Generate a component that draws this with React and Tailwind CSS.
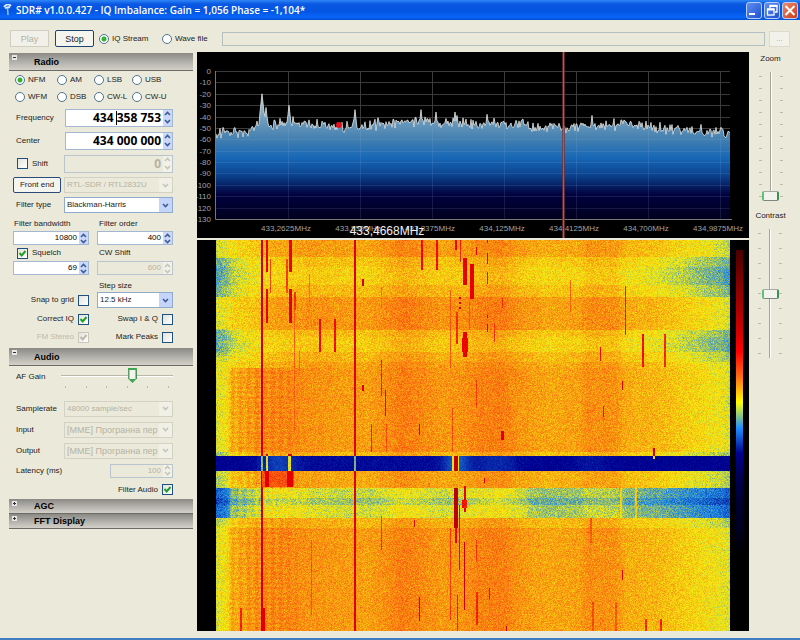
import React, { useEffect, useRef } from "react";

/* ---------- signal data ---------- */

function makeRandom(seed) {
  let s = seed;
  return () => {
    s = (s * 1664525 + 1013904223) >>> 0;
    return s / 4294967296;
  };
}

function interpolate(points, x) {
  if (x <= points[0][0]) return points[0][1];
  for (let i = 1; i < points.length; i++) {
    const [x1, y1] = points[i];
    if (x <= x1) {
      const [x0, y0] = points[i - 1];
      return y0 + ((y1 - y0) * (x - x0)) / (x1 - x0);
    }
  }
  return points[points.length - 1][1];
}

const PALETTE = [
  [0, 0, 0], [0, 0, 32], [0, 0, 48], [0, 0, 80], [0, 0, 145], [30, 135, 225],
  [244, 236, 16], [250, 109, 16], [240, 0, 0], [198, 0, 0], [159, 0, 0], [117, 0, 0], [74, 0, 0],
];

const WF_W = 514;
const WF_H = 391;

const COLUMN_LEVEL = [
  [0, 5.9], [10, 6.1], [16, 6.4], [45, 6.68], [75, 6.75], [100, 6.7], [150, 6.6], [172, 6.75], [185, 6.88],
  [205, 6.78], [225, 6.65], [245, 6.7], [264, 6.83], [285, 6.88], [305, 6.68], [330, 6.55], [362, 6.6],
  [372, 6.75], [400, 6.7], [410, 6.5], [440, 6.43], [465, 6.28], [490, 6.12], [505, 6.0], [514, 5.85],
];

/* y0, y1, level offset, extra offset near both band edges */
const TIME_BANDS = [
  [0, 17, -0.05, -0.1], [17, 27, -0.32, -0.18], [27, 45, -0.42, -0.28], [45, 57, -0.26, -0.2],
  [57, 90, 0.02, -0.04], [90, 97, -0.28, -0.18], [97, 112, -0.38, -0.2], [112, 122, -0.2, -0.1],
  [122, 128, -0.06, 0], [212, 216, -0.25, -0.1], [231, 248, -0.12, -0.12], [248, 258, -0.9, -0.2],
  [258, 265, -1.12, -0.22], [265, 278, -0.85, -0.2], [278, 288, -0.2, -0.05],
];

/* x, y0, y1, width, level */
const STREAKS = [
  [50, 0, 32, 2, 8.1], [50, 49, 83, 2, 8.1], [73, 0, 32, 3, 8.1], [73, 49, 83, 3, 8.3],
  [54, 19, 53, 1, 7.4], [70, 19, 53, 2, 7.4], [78, 52, 70, 2, 7.5], [78, 70, 190, 1, 7.1],
  [83, 110, 135, 1, 7], [93, 34, 65, 1, 7], [103, 79, 112, 2, 8], [118, 79, 112, 2, 7.9],
  [146, 39, 46, 2, 8.5], [146, 145, 151, 2, 8.5], [165, 47, 68, 1, 7], [165, 120, 156, 1, 7.7],
  [169, 150, 176, 1, 8.1], [155, 184, 212, 1, 7.7], [170, 184, 212, 1, 7.3], [203, 184, 195, 1, 8.6],
  [205, 0, 30, 2, 8], [220, 0, 30, 2, 7.9], [239, 0, 10, 2, 8], [244, 0, 22, 1, 7.7],
  [247, 18, 45, 4, 8.2], [254, 24, 59, 4, 8.2], [243, 57, 59, 2, 8.5], [243, 62, 64, 2, 8.5],
  [243, 67, 69, 2, 8.5], [240, 72, 104, 2, 7.6], [247, 92, 117, 4, 8.3], [246, 98, 112, 6, 8],
  [234, 50, 128, 1, 7.2], [236, 168, 212, 1, 7.3], [260, 7, 15, 1, 8], [260, 140, 168, 1, 7.5],
  [253, 60, 90, 1, 7.2], [271, 0, 3, 1, 8], [271, 13, 24, 1, 8.2], [271, 32, 44, 1, 8],
  [271, 75, 78, 1, 8.4], [271, 84, 92, 1, 8.4], [278, 83, 102, 1, 7.5], [286, 58, 68, 1, 7.5],
  [285, 191, 200, 3, 8.4], [354, 40, 72, 1, 7.1], [384, 107, 121, 1, 8], [387, 166, 177, 1, 7.8],
  [406, 141, 150, 1, 8.3], [409, 46, 95, 1, 7.8], [426, 94, 127, 2, 7.9], [448, 94, 127, 2, 7.6],
  [437, 208, 216, 2, 8.8], [437, 216, 219, 2, 6.2], [46, 231, 247, 32, 7.25], [49, 231, 247, 4, 8.4],
  [71, 231, 247, 6, 8.3], [50, 214, 216, 2, 8.6], [72, 214, 216, 4, 8.6],
  [238, 248, 288, 4, 9.2], [239, 288, 303, 2, 8], [243, 265, 330, 1, 8.2], [248, 246, 272, 2, 8.2],
  [246, 260, 268, 5, 7.8], [248, 302, 370, 1, 8.8], [234, 288, 380, 1, 7.5], [260, 300, 322, 1, 7.5],
  [260, 352, 385, 2, 7.7], [203, 357, 381, 1, 8.5], [165, 276, 310, 1, 7.5], [198, 280, 287, 1, 8],
  [24, 368, 391, 2, 7.7], [46, 368, 391, 3, 8.4], [241, 355, 391, 1, 7.7], [95, 300, 375, 1, 7.2],
  [404, 248, 278, 2, 6.2], [419, 248, 278, 2, 6.3], [406, 330, 340, 1, 8.2], [374, 278, 303, 2, 7.2],
  [376, 362, 391, 2, 7.3], [399, 362, 391, 2, 7.2], [429, 379, 391, 2, 7.6], [444, 379, 391, 2, 7.7],
  [290, 386, 391, 1, 8.6], [268, 238, 243, 1, 8.5], [273, 348, 360, 1, 7.8],
];

function waterfallLevel(x, y, rand) {
  const noise = rand() + rand() + rand() - 1.5;
  if (y >= 216 && y < 231) {
    if (x === 45 || x === 46) return 5.5 + noise * 0.3;
    if (x === 50 || x === 51) return 5.8 + noise * 0.3;
    if (x >= 72 && x <= 74) return 6 + noise * 0.3;
    if (x === 139 || x === 138) return 5.4 + noise * 0.2;
    if (x >= 238 && x <= 241) return 9 + noise * 0.3;
    if (x === 236 || x === 237 || x === 242) return 5.9;
    const glow =
      0.6 * Math.exp(-((x - 240) ** 2) / 160) + 0.4 * Math.exp(-((x - 62) ** 2) / 300) +
      0.22 * Math.exp(-((x - 280) ** 2) / 500) + 0.15 * Math.exp(-((x - 374) ** 2) / 300) +
      (x > 40 && x < 300 ? 0.07 : 0);
    return 4 + glow + noise * 0.12;
  }
  let v = interpolate(COLUMN_LEVEL, x);
  let amp = 0.33;
  const edge = x < 45 ? 1 - x / 70 : x > 400 ? (x - 400) / 110 : 0;
  for (const [y0, y1, offset, edgeOffset] of TIME_BANDS) {
    if (y >= y0 && y < y1) v += offset + edgeOffset * edge;
  }
  if (y >= 248 && y < 278) {
    if (x > 45 && x < 90) v += 0.05;
    if (x > 310) v -= 0.1;
    else if (x < 14) v -= 0.1;
    else v += 0.05;
  }
  /* the left shoulder stays near yellow before the gain change */
  if (y < 128 && x < 90) v = x < 46 ? v * 0.55 + 2.68 : v - 0.3 * (1 - x / 110);
  if (y < 128 && x < 46) {
    v -= (x < 30 ? 0.32 * (1 - x / 34) : 0) * (y > 17 && y < 57 ? 1 : y > 88 && y < 116 ? 0.95 : 0);
    amp = 0.36;
  }
  if (y >= 128 && x > 12 && x < 90) {
    const fade = x < 60 ? 1 : (90 - x) / 30;
    v += (0.1 + 0.1 * Math.sin((x - 14) * 0.78) + 0.08 * Math.sin(y * 1.25)) * fade;
  }
  if (x === 45 || x === 46) return 9.2 + noise * 0.4 - (x === 46 ? 0.5 : 0);
  if (x === 138 || x === 139) return 8.4 + noise * 0.4;
  return v + noise * amp;
}

function paintWaterfall(canvas) {
  const ctx = canvas.getContext("2d");
  const image = ctx.createImageData(WF_W, WF_H);
  const rand = makeRandom(427);
  const levels = new Float32Array(WF_W * WF_H);
  for (let y = 0; y < WF_H; y++) {
    for (let x = 0; x < WF_W; x++) levels[y * WF_W + x] = waterfallLevel(x, y, rand);
  }
  for (const [x0, y0, y1, w, level] of STREAKS) {
    for (let y = y0; y < y1; y++) {
      for (let x = x0; x < x0 + w; x++) levels[y * WF_W + x] = level + (rand() - 0.5) * 0.5;
    }
  }
  for (let i = 0; i < levels.length; i++) {
    const v = Math.max(0, Math.min(11.99, levels[i]));
    const k = Math.floor(v);
    const f = v - k;
    for (let c = 0; c < 3; c++) {
      image.data[i * 4 + c] = PALETTE[k][c] + (PALETTE[k + 1][c] - PALETTE[k][c]) * f;
    }
    image.data[i * 4 + 3] = 255;
  }
  ctx.putImageData(image, 0, 0);
}

const FLOOR = [
  [19, -54], [50, -53], [60, -47], [95, -46], [133, -48], [155, -49], [170, -49], [185, -46], [215, -45],
  [255, -46], [305, -46], [343, -49], [368, -50], [403, -47], [435, -47], [465, -51], [500, -52], [533, -55],
];
const PEAKS = [
  [65, -20], [69, -32], [92, -30], [96, -40], [158, -34], [224, -34], [239, -36], [258, -36], [260, -39],
  [290, -38], [395, -39], [428, -44], [463, -45],
];

const dbToY = (db) => 19 - (db * 148) / 130;

function buildTrace() {
  const rand = makeRandom(91);
  const pts = [];
  for (let x = 19; x <= 533; x++) {
    let db = interpolate(FLOOR, x) + (rand() + rand() - 1) * 6;
    for (const [px, level] of PEAKS) {
      const d = Math.abs(x - px);
      if (d < 3) db = Math.max(db, level - d * 8);
    }
    pts.push(`${x},${dbToY(db).toFixed(1)}`);
  }
  return pts.join(" ");
}

const TRACE = buildTrace();
const DB_MARKS = [0, 10, 20, 30, 40, 50, 60, 70, 80, 90, 100, 110, 120, 130];
const FREQ_MARKS = [
  [92, "433,2625MHz"], [164, "433,550MHz"], [236, "433,8375MHz"], [308, "434,125MHz"],
  [380, "434,4125MHz"], [452, "434,700MHz"], [524, "434,9875MHz"],
];

/* ---------- plots ---------- */

function Spectrum() {
  return (
    <svg viewBox="0 0 552 186" className="block w-full bg-black font-['Liberation_Sans',sans-serif]">
      <defs>
        <linearGradient id="fill" gradientUnits="userSpaceOnUse" x1="0" y1="45" x2="0" y2="167">
          <stop offset="0" stopColor="#a9c4d6" />
          <stop offset="0.2" stopColor="#6b9abc" />
          <stop offset="0.34" stopColor="#4480b0" />
          <stop offset="0.5" stopColor="#1767b6" />
          <stop offset="0.64" stopColor="#0b438f" />
          <stop offset="0.8" stopColor="#02023f" />
          <stop offset="1" stopColor="#00001e" />
        </linearGradient>
      </defs>
      <g stroke="#3b3b3b" strokeWidth="1">
        {DB_MARKS.slice(0, 13).map((d) => (
          <line key={d} x1="19" x2="533" y1={Math.round(dbToY(-d)) + 0.5} y2={Math.round(dbToY(-d)) + 0.5} />
        ))}
        {FREQ_MARKS.map(([x]) => (
          <line key={x} x1={x - 0.5} x2={x - 0.5} y1="19" y2="167" />
        ))}
      </g>
      <polygon points={`19,167 ${TRACE} 533,167`} fill="url(#fill)" />
      <g stroke="#a0c0e0" strokeOpacity="0.13" strokeWidth="1">
        {DB_MARKS.slice(6, 13).map((d) => (
          <line key={d} x1="19" x2="533" y1={Math.round(dbToY(-d)) + 0.5} y2={Math.round(dbToY(-d)) + 0.5} />
        ))}
        {FREQ_MARKS.map(([x]) => (
          <line key={x} x1={x - 0.5} x2={x - 0.5} y1="76" y2="167" />
        ))}
      </g>
      <polyline points={TRACE} fill="none" stroke="#e6e6e2" strokeWidth="0.8" />
      <path d="M18.500 19V167.500H535" fill="none" stroke="#777" />
      <g fill="#a0a0a0" fontSize="8">
        {DB_MARKS.map((d) => (
          <text key={d} x="14" y={Math.round(dbToY(-d)) + 3} textAnchor="end">
            {d === 0 ? "0" : `-${d}`}
          </text>
        ))}
        {FREQ_MARKS.map(([x, label]) => (
          <text key={x} x={x - 3} y="179" textAnchor="middle">
            {label}
          </text>
        ))}
      </g>
      <text x="190" y="183" textAnchor="middle" fontSize="12" fill="#f0f0f0">
        433,4668MHz
      </text>
      <circle cx="142" cy="73" r="3" fill="#e0101c" />
      <rect x="365" y="0" width="3" height="186" fill="#7a3030" fillOpacity="0.7" />
      <rect x="366" y="0" width="1" height="186" fill="#c2524a" />
    </svg>
  );
}

function Waterfall() {
  const ref = useRef(null);
  useEffect(() => paintWaterfall(ref.current), []);
  return (
    <div className="flex bg-black">
      <div className="w-[19px] shrink-0" />
      <canvas ref={ref} width={WF_W} height={WF_H} aria-label="Waterfall" className="block w-0 flex-1" />
      <div className="flex w-[19px] shrink-0 justify-center pt-[10px] pb-2">
        <div className="h-[305px] w-[7px] bg-[linear-gradient(#4a0000,#750000,#9f0000,#c60000,#ff0000,#fe6d16,#ffff00,#1e90ff,#000091,#000050,#000030,#000020,#000000)]" />
      </div>
    </div>
  );
}

/* ---------- controls ---------- */

function Chevron({ up, muted }) {
  return (
    <svg viewBox="0 0 7 5" className="h-[5px] w-[7px]" fill="none" stroke={muted ? "#c6c5ba" : "#3f5b96"} strokeWidth="1.600">
      <path d={up ? "M1 4L3.500 1.500L6 4" : "M1 1L3.500 3.500L6 1"} />
    </svg>
  );
}

function Radio({ name, label, checked }) {
  return (
    <label className="flex items-center gap-[3px] whitespace-nowrap">
      <input
        type="radio"
        name={name}
        defaultChecked={checked}
        className="m-0 h-[10px] w-[10px] shrink-0 appearance-none rounded-full border border-[#4f7390] bg-white checked:bg-[radial-gradient(circle,#2fb32f_0_2px,#ffffff_3px)]"
      />
      {label}
    </label>
  );
}

function Check({ label, checked, disabled, before }) {
  const box = (
    <span className="relative h-[11px] w-[11px] shrink-0">
      <input
        type="checkbox"
        defaultChecked={checked}
        disabled={disabled}
        className="peer m-0 block h-[11px] w-[11px] appearance-none border border-[#1f5080] bg-[linear-gradient(135deg,#e2e2dc,#ffffff)] disabled:border-[#cac8bb]"
      />
      {checked && (
        <svg viewBox="0 0 11 11" className="pointer-events-none absolute inset-0" fill="none" stroke={disabled ? "#bdbbae" : "#21a121"} strokeWidth="2">
          <path d="M2.500 5L4.700 7.500L8.500 3" />
        </svg>
      )}
    </span>
  );
  return (
    <label className={`flex items-center gap-1 whitespace-nowrap ${disabled ? "text-[#bdbbad]" : ""}`}>
      {before && label}
      {box}
      {!before && label}
    </label>
  );
}

function Spin({ id, label, value, disabled, big, caret, className }) {
  return (
    <div className={`flex border ${disabled ? "border-[#b9c4cc] bg-[#ebe9da]" : "border-[#a3b8d0] bg-white"} ${big ? "h-[18px]" : "h-[14px]"} ${className || ""}`}>
      <div className="relative flex min-w-0 flex-1">
        <input
          id={id}
          aria-label={label}
          defaultValue={value}
          disabled={disabled}
          className={`w-full min-w-0 bg-transparent pr-[2px] text-right outline-none ${disabled ? "text-[#b5b3a5]" : "text-black"} ${big ? "font-['Open_Sans',sans-serif] text-[12px] font-bold" : ""}`}
        />
        {caret && <span className="absolute top-px right-[46px] h-[14px] w-px bg-black" />}
      </div>
      <div className={`flex w-[9px] shrink-0 flex-col ${disabled ? "bg-[#f2f1e8]" : "bg-[#c9d8fb]"}`}>
        <button aria-label="Increase" disabled={disabled} className="flex flex-1 items-center justify-center">
          <Chevron up muted={disabled} />
        </button>
        <button aria-label="Decrease" disabled={disabled} className="flex flex-1 items-center justify-center">
          <Chevron muted={disabled} />
        </button>
      </div>
    </div>
  );
}

function Select({ id, label, value, disabled, large }) {
  return (
    <div className={`relative h-4 w-[109px] shrink-0 border ${disabled ? "border-[#d3d1c4]" : "border-[#8fabc9] bg-white"}`}>
      <select
        id={id}
        aria-label={label}
        disabled={disabled}
        className={`block h-full w-full appearance-none bg-transparent pr-3 pl-[2px] outline-none disabled:text-[#b5b3a5] disabled:opacity-100 ${large ? "text-[9px]" : ""}`}
      >
        <option>{value}</option>
      </select>
      <span className={`pointer-events-none absolute inset-y-0 right-0 flex w-[13px] items-center justify-center ${disabled ? "bg-[#f1f0e7]" : "bg-[#c5d5fa]"}`}>
        <Chevron muted={disabled} />
      </span>
    </div>
  );
}

function PanelHeader({ title, open, slim }) {
  return (
    <button
      aria-expanded={!!open}
      className={`relative flex w-full items-center border-b border-[#6d6b66] bg-[linear-gradient(#8b8984,#b4b2ac_55%,#d2d0c8)] pl-[25px] text-left font-bold text-[9px] text-black ${slim ? "h-[15px]" : "h-[18px]"}`}
    >
      <span className="absolute top-[2px] left-[3px] flex h-[5px] w-[5px] items-center justify-center bg-[#e8e8e8]">
        <svg viewBox="0 0 5 5" className="h-[5px] w-[5px]" stroke="#333" strokeWidth="1">
          <path d={open ? "M1 2.500H4" : "M1 2.500H4M2.500 1V4"} />
        </svg>
      </span>
      {title}
    </button>
  );
}

function Row({ id, label, height, children }) {
  return (
    <div className={`flex items-center justify-between pl-[7px] pr-5 ${height}`}>
      <label htmlFor={id}>{label}</label>
      {children}
    </div>
  );
}

function VerticalSlider({ id, label, value, ticks }) {
  return (
    <div className="flex flex-col items-center">
      <label htmlFor={id} className="flex h-[14px] items-center">
        {label}
      </label>
      <div className="relative mt-[6px] flex h-[129px] w-6 justify-between">
        {[0, 1].map((side) => (
          <div key={side} className="flex flex-col justify-between py-1">
            {Array.from({ length: ticks }, (_, i) => (
              <span key={i} className="h-px w-[3px] bg-[#bdbaab]" />
            ))}
          </div>
        ))}
        <input
          id={id}
          type="range"
          defaultValue={value}
          className="absolute inset-0 m-0 h-full w-full appearance-none bg-[linear-gradient(90deg,transparent_11px,#a5a498_11px_12px,#ffffff_12px_13px,transparent_13px)] [direction:rtl] [writing-mode:vertical-lr] [&::-webkit-slider-thumb]:h-[10px] [&::-webkit-slider-thumb]:w-[17px] [&::-webkit-slider-thumb]:appearance-none [&::-webkit-slider-thumb]:rounded-[2px] [&::-webkit-slider-thumb]:border-t [&::-webkit-slider-thumb]:border-b [&::-webkit-slider-thumb]:border-l-2 [&::-webkit-slider-thumb]:border-r-2 [&::-webkit-slider-thumb]:border-t-[#a3aaa3] [&::-webkit-slider-thumb]:border-b-[#7d877f] [&::-webkit-slider-thumb]:border-l-[#5fc078] [&::-webkit-slider-thumb]:border-r-[#3c8f50] [&::-webkit-slider-thumb]:bg-[#f3f3ee]"
        />
      </div>
    </div>
  );
}

function GainSlider() {
  return (
    <div className="relative mt-[2px] h-5 w-[112px] shrink-0">
      <div className="absolute inset-x-0 top-[7px] h-[2px] border-t border-[#b9b8ab] bg-white" />
      <div className="absolute inset-x-1 bottom-0 flex justify-between">
        {[0, 1, 2, 3, 4, 5].map((i) => (
          <span key={i} className="h-[2px] w-px bg-[#bdbaab]" />
        ))}
      </div>
      <input
        id="gain"
        type="range"
        defaultValue="65"
        className="absolute inset-x-0 top-0 m-0 h-[15px] w-full appearance-none bg-transparent [&::-webkit-slider-thumb]:h-[15px] [&::-webkit-slider-thumb]:w-[9px] [&::-webkit-slider-thumb]:appearance-none [&::-webkit-slider-thumb]:bg-[linear-gradient(90deg,#5f9c6b_0_1px,#f4f4ef_2px_7px,#3f8c50_8px)] [&::-webkit-slider-thumb]:border-t-2 [&::-webkit-slider-thumb]:border-b-4 [&::-webkit-slider-thumb]:border-[#3fa653] [&::-webkit-slider-thumb]:[clip-path:polygon(0_0,100%_0,100%_70%,50%_100%,0_70%)]"
      />
    </div>
  );
}

/* ---------- window parts ---------- */

function TitleBar() {
  const btn = "flex h-[17px] w-4 items-center justify-center rounded-[3px] border border-[#b9cdf5]";
  return (
    <header className="flex h-5 items-center bg-[linear-gradient(#2f86f5,#0a58e4_20%,#0354e0_55%,#0866fb_85%,#0450d0)] pr-[2px] pl-[3px] text-white">
      <svg viewBox="0 0 10 12" className="h-3 w-[10px]" fill="none" stroke="#d6e4f4">
        <path d="M1 3C3 0 6 0 8 2M2 4L7 3" strokeWidth="2" />
        <path d="M4.500 4L5 11" stroke="#8fc0f0" strokeWidth="1.500" />
      </svg>
      <h1 className="ml-[3px] flex-1 font-['Open_Sans',sans-serif] text-[10px] font-semibold whitespace-pre">
        SDR# v1.0.0.427 - IQ Imbalance: Gain = 1,056 Phase = -1,104*
      </h1>
      <div className="flex gap-[2px]">
        <button aria-label="Minimize" className={`${btn} bg-[linear-gradient(135deg,#5f8ff0,#1f50d0)]`}>
          <svg viewBox="0 0 14 15" className="h-[15px] w-[14px]">
            <rect x="2" y="10" width="6" height="2" fill="#fff" />
          </svg>
        </button>
        <button aria-label="Restore" className={`${btn} bg-[linear-gradient(135deg,#5f8ff0,#1f50d0)]`}>
          <svg viewBox="0 0 14 15" className="h-[15px] w-[14px]" fill="none" stroke="#fff">
            <path d="M5 5V3H12V9H10" strokeWidth="1.300" />
            <path d="M4.500 2.800H12.500M2 6.500H9.500" strokeWidth="2" />
            <rect x="2.500" y="6" width="6.500" height="6" strokeWidth="1.300" />
          </svg>
        </button>
        <button aria-label="Close" className={`${btn} bg-[linear-gradient(135deg,#ec8a6c,#cc3a18)]`}>
          <svg viewBox="0 0 14 15" className="h-[15px] w-[14px]" stroke="#fff" strokeWidth="2">
            <path d="M2.500 3L11.500 12M11.500 3L2.500 12" />
          </svg>
        </button>
      </div>
    </header>
  );
}

function Toolbar() {
  return (
    <div className="flex h-8 items-center pt-[5px] pr-[10px] pl-[10px]">
      <button disabled className="h-[17px] w-[39px] border border-[#d0cec0] bg-[#f2f1e9] text-[9px] text-[#b3b1a3]">
        Play
      </button>
      <button className="ml-[6px] h-[17px] w-[39px] rounded-[2px] border border-[#1d4470] bg-[#f5f5f0] text-[9px]">Stop</button>
      <div className="ml-[5px] flex w-[63px]">
        <Radio name="source" label="IQ Stream" checked />
      </div>
      <div className="flex w-[60px]">
        <Radio name="source" label="Wave file" />
      </div>
      <input aria-label="Wave file path" disabled className="h-[14px] min-w-0 flex-1 border border-[#b4bfc2] bg-[#ebe9da]" />
      <button disabled aria-label="Browse" className="ml-1 h-4 w-[21px] border border-[#dcdacd] bg-[#f3f2ea] leading-[10px] text-[#a9a799]">
        ...
      </button>
    </div>
  );
}

function Sidebar() {
  return (
    <aside className="mt-px w-[184px] shrink-0">
      <PanelHeader title="Radio" open />
      <div className="grid grid-cols-[42px_37px_38px_1fr] auto-rows-[17px] items-center pl-[6px]">
        <Radio name="mode" label="NFM" checked />
        <Radio name="mode" label="AM" />
        <Radio name="mode" label="LSB" />
        <Radio name="mode" label="USB" />
        <Radio name="mode" label="WFM" />
        <Radio name="mode" label="DSB" />
        <Radio name="mode" label="CW-L" />
        <Radio name="mode" label="CW-U" />
      </div>
      <div className="pt-px pb-px">
        <Row id="freq" label="Frequency" height="h-[23px]">
          <Spin id="freq" value="434 358 753" big caret className="w-[108px]" />
        </Row>
        <Row id="center" label="Center" height="h-[23px]">
          <Spin id="center" value="434 000 000" big className="w-[108px]" />
        </Row>
        <div className="flex h-[23px] items-center justify-between pr-5 pl-2">
          <Check label="Shift" />
          <Spin label="Shift amount" value="0" big disabled className="w-[109px]" />
        </div>
        <div className="flex h-5 items-center justify-between pr-5 pl-1">
          <button className="h-4 w-12 rounded-[2px] border border-[#2a4a78] bg-[#f5f5f0] whitespace-nowrap">Front end</button>
          <Select label="Front end device" value="RTL-SDR / RTL2832U" disabled />
        </div>
        <Row id="ftype" label="Filter type" height="h-5">
          <Select id="ftype" value="Blackman-Harris" />
        </Row>
      </div>
      <div className="grid grid-cols-[76px_76px] justify-between pr-5 pl-1">
        <label htmlFor="bw" className="flex h-[15px] items-center pl-px">Filter bandwidth</label>
        <label htmlFor="order" className="flex h-[15px] items-center pl-[2px]">Filter order</label>
        <Spin id="bw" value="10800" />
        <Spin id="order" value="400" />
        <div className="flex h-4 items-center pl-1">
          <Check label="Squelch" checked />
        </div>
        <label htmlFor="cw" className="flex h-4 items-center pl-[2px]">CW Shift</label>
        <Spin label="Squelch level" value="69" />
        <Spin id="cw" value="600" disabled />
        <span />
        <label htmlFor="step" className="flex h-[17px] items-end pl-[2px]">Step size</label>
        <div className="flex items-center justify-end">
          <Check label="Snap to grid" before />
        </div>
        <div className="relative h-4 border border-[#8fabc9] bg-white">
          <select id="step" className="block h-full w-full appearance-none bg-transparent pl-[2px] outline-none">
            <option>12.5 kHz</option>
          </select>
          <span className="pointer-events-none absolute inset-y-0 right-0 flex w-[13px] items-center justify-center bg-[#c5d5fa]">
            <Chevron />
          </span>
        </div>
      </div>
      <div className="grid grid-cols-[76px_76px] auto-rows-[18px] justify-between justify-items-end pt-[2px] pr-5 pb-[2px] pl-1">
        <Check label="Correct IQ" checked before />
        <Check label="Swap I & Q" before />
        <Check label="FM Stereo" checked disabled before />
        <Check label="Mark Peaks" before />
      </div>

      <PanelHeader title="Audio" open />
      <div className="flex h-8 items-start justify-between pr-5 pl-[7px]">
        <label htmlFor="gain" className="pt-[5px]">AF Gain</label>
        <GainSlider />
      </div>
      <Row id="rate" label="Samplerate" height="h-[21px]">
        <Select id="rate" value="48000 sample/sec" disabled />
      </Row>
      <Row id="in" label="Input" height="h-[21px]">
        <Select id="in" value="[MME] Програнна пер" disabled large />
      </Row>
      <Row id="out" label="Output" height="h-[21px]">
        <Select id="out" value="[MME] Програнна пер" disabled large />
      </Row>
      <Row id="lat" label="Latency (ms)" height="h-[19px]">
        <Spin id="lat" value="100" disabled className="w-[63px]" />
      </Row>
      <div className="flex h-[19px] justify-end pr-5">
        <Check label="Filter Audio" checked before />
      </div>
      <PanelHeader title="AGC" slim />
      <PanelHeader title="FFT Display" slim />
    </aside>
  );
}

export default function App() {
  return (
    <div className="flex min-h-screen flex-col border-b-2 border-[#3f7dc0] bg-[#ebe9d9] font-['Liberation_Sans','Noto_Sans',sans-serif] text-[8px] leading-[12px] text-[#1c1c1c]">
      <TitleBar />
      <Toolbar />
      <main className="flex flex-1 pl-[9px]">
        <Sidebar />
        <section className="ml-1 flex min-w-0 flex-1 flex-col gap-[2px] pb-[7px]">
          <Spectrum />
          <Waterfall />
        </section>
        <aside className="flex w-[51px] shrink-0 flex-col items-center gap-2 pr-2">
          <VerticalSlider id="zoom" label="Zoom" value="0" ticks={11} />
          <VerticalSlider id="contrast" label="Contrast" value="50" ticks={9} />
        </aside>
      </main>
    </div>
  );
}
